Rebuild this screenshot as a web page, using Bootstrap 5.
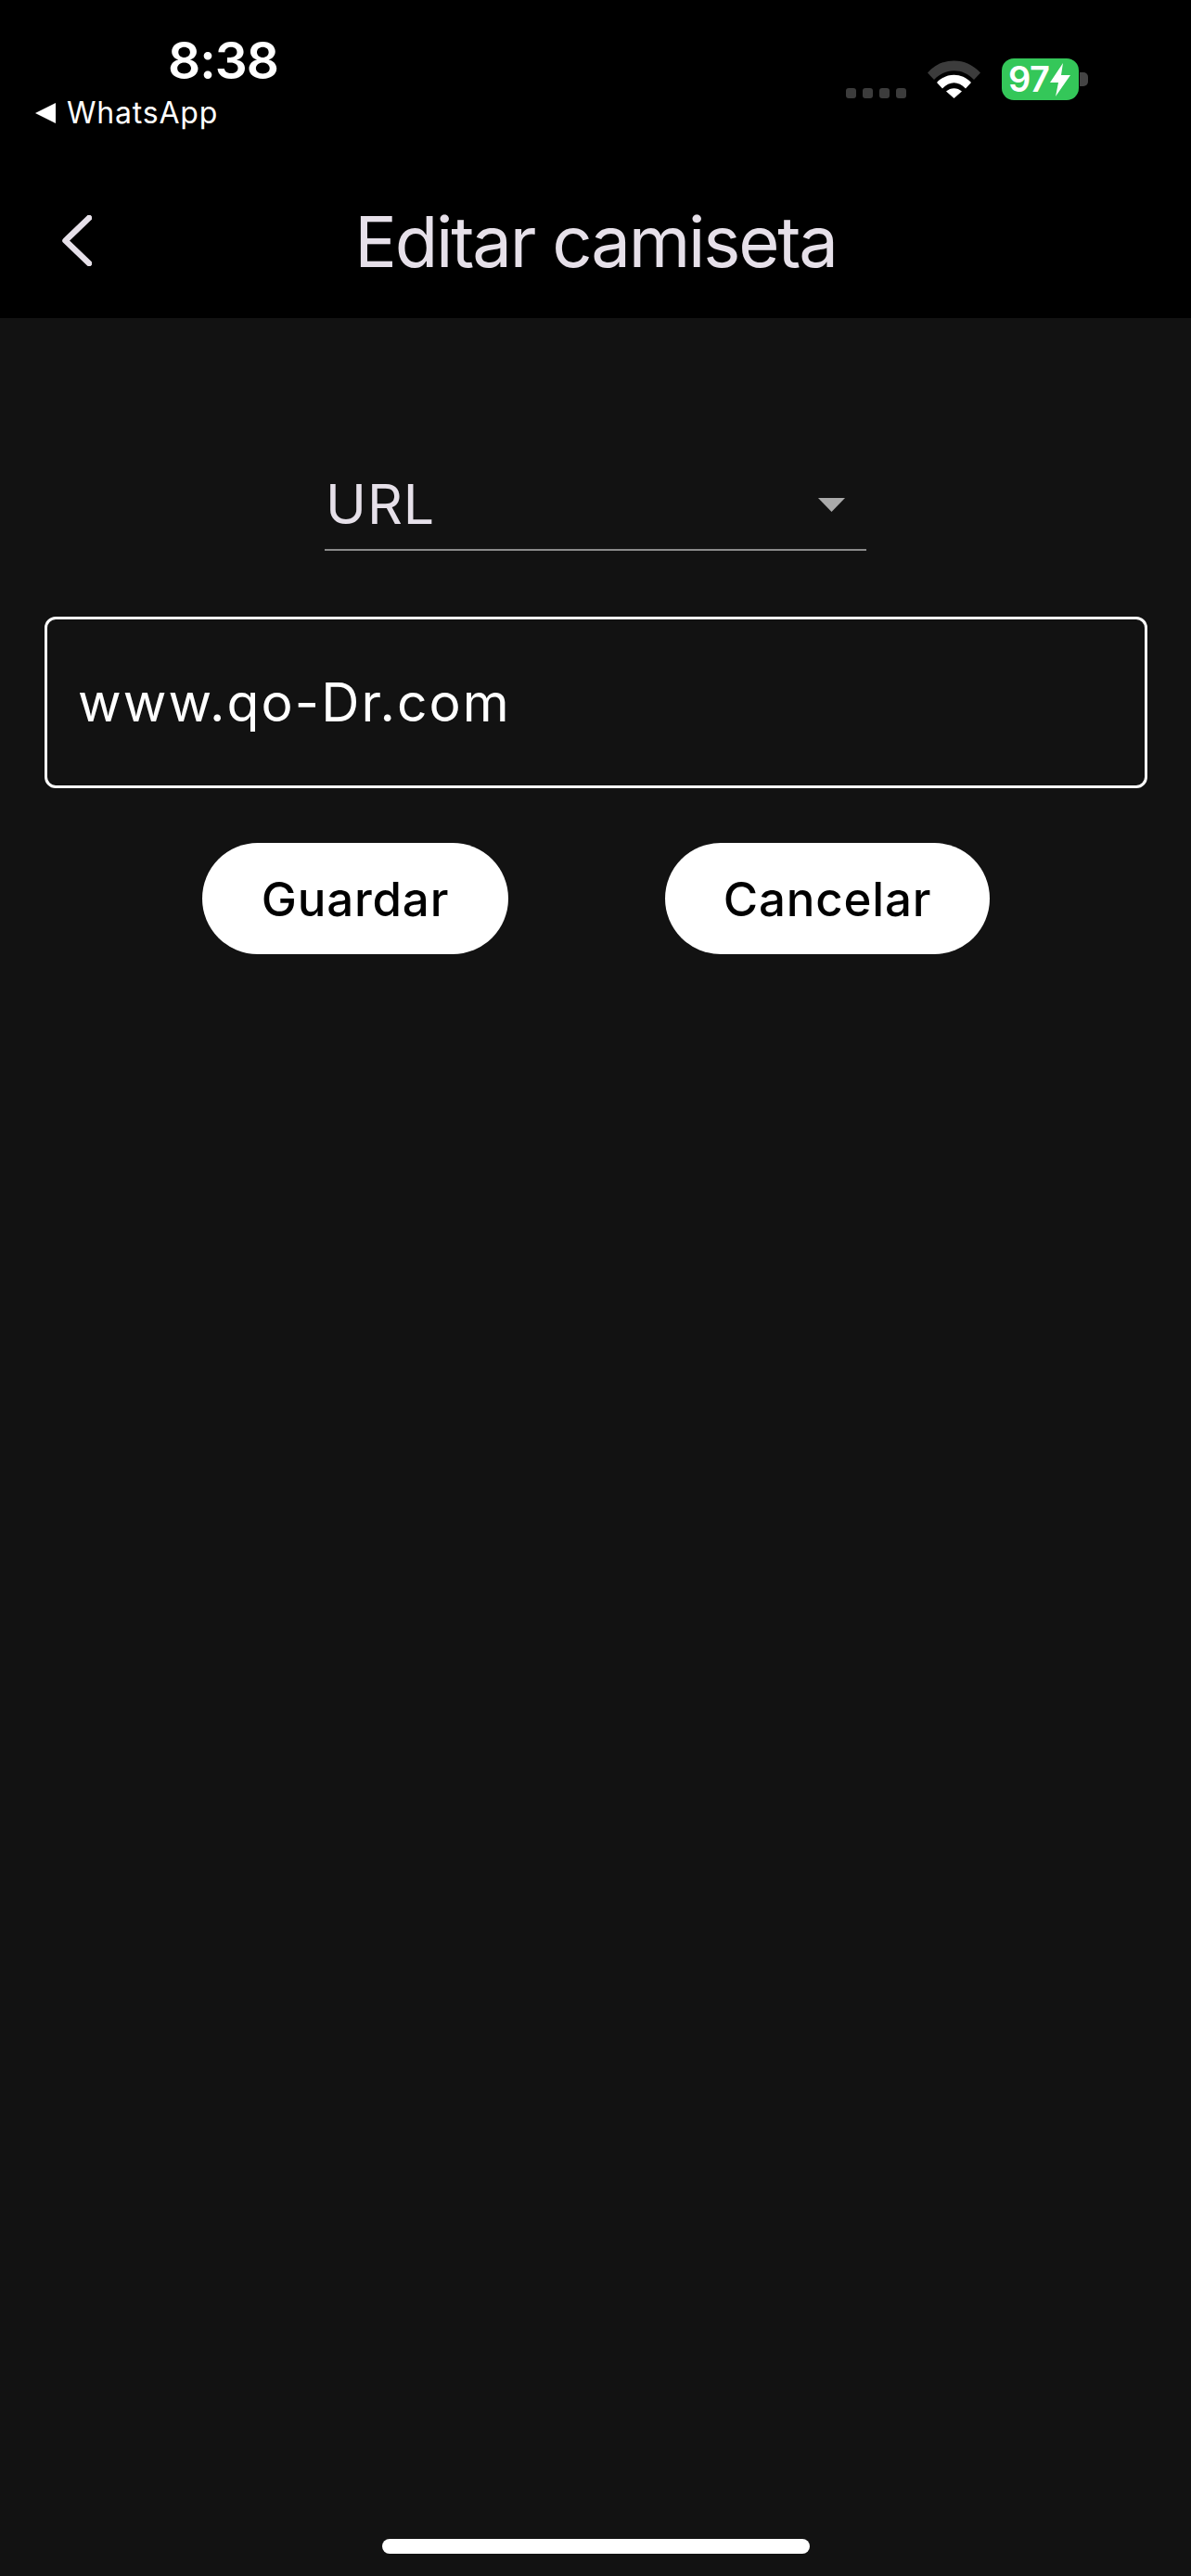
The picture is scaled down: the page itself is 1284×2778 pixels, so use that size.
<!DOCTYPE html>
<html lang="es">
<head>
<meta charset="utf-8">
<title>Editar camiseta</title>
<meta name="viewport" content="width=device-width, initial-scale=1">
<link rel="stylesheet" href="https://cdn.jsdelivr.net/npm/bootstrap@5.3.0/dist/css/bootstrap.min.css">
<style>
html, body { height: 100%; }
body { background: #121212; font-family: "Inter", "Roboto", sans-serif; color: #e6e0e9; }
.screen { height: 2778px; }
.top-area { background: #000; height: 343px; }
.status-row { height: 207px; padding: 35px 111px 0 38px; }
.clock-col { width: 262px; }
.clock { font-size: 55px; font-weight: 600; line-height: 60px; color: #fff; text-align: right; margin-bottom: 8px; letter-spacing: -1px; }
.back-app { font-size: 32px; line-height: 38px; color: #fff; gap: 12px; letter-spacing: .8px; }
.tri { width: 22px; height: 22px; }
.sig-dots { gap: 7px; padding-top: 60px; margin-right: 23px; }
.sig-dots span { width: 11px; height: 11px; border-radius: 3px; background: #3c3c3c; }
.wifi-ic { width: 57px; height: 41px; margin-top: 30px; margin-right: 23px; display: block; }
.batt-wrap { margin-top: 28px; }
.batt { width: 83px; height: 45px; background: #34c759; border-radius: 13px; color: #fff; font-size: 38px; font-weight: 600; line-height: 45px; gap: 1px; padding-left: 7px; letter-spacing: -.5px; }
.bolt { width: 22px; height: 36px; }
.batt-nub { width: 9px; height: 15px; background: #444; border-radius: 0 5px 5px 0; margin-left: 1px; }
.nav-row { display: grid; grid-template-columns: 1fr auto 1fr; height: 136px; }
.chev { width: 32px; height: 55px; margin-left: 67px; margin-top: 25px; display: block; }
.page-title { font-size: 76px; font-weight: 400; line-height: 106px; margin: 0; color: #e6e0e9; letter-spacing: -2.2px; }
.pick-row { width: 584px; margin: 141px auto 0; height: 110px; border-bottom: 2px solid #8a8a8a; padding: 11px 23px 0 1px; }
.pick-val { font-size: 59px; line-height: 70px; letter-spacing: 1px; }
.pick-arrow { width: 29px; height: 15px; display: block; margin-top: 1px; }
.url-box.form-control { margin: 71px 47px 0 48px; width: 1189px; height: 185px; background: transparent; border: 3px solid #fff; border-radius: 12px; color: #fff; font-size: 57px; line-height: 68px; padding: 56px 33px; letter-spacing: 2.1px; }
.act-row { margin-top: 59px; padding-left: 218px; gap: 169px; }
.act-btn.btn { height: 120px; border-radius: 60px; background: #fff; color: #000; border: 0; font-size: 51px; font-weight: 500; padding: 2px 0 0; letter-spacing: .8px; }
.act-save { width: 330px; }
.act-cancel { width: 350px; }
.home-bar { width: 461px; height: 16px; background: #fff; border-radius: 8px; margin: auto auto 24px; }
</style>
</head>
<body>
<div class="screen d-flex flex-column">
  <header class="top-area">
    <div class="status-row d-flex justify-content-between">
      <div class="clock-col">
        <div class="clock">8:38</div>
        <div class="back-app d-flex align-items-center">
          <svg class="tri" viewBox="0 0 22 22"><path d="M0 11 22 0V22Z" fill="#fff"/></svg>
          <span>WhatsApp</span>
        </div>
      </div>
      <div class="d-flex align-items-start">
        <div class="sig-dots d-flex"><span></span><span></span><span></span><span></span></div>
        <svg class="wifi-ic" viewBox="0 0 57 41">
          <path d="M0 13.5C15 -4 42 -4 57 13.5L50 21C38 8 19 8 7 21Z" fill="#3c3c3c"/>
          <path d="M10 24C20 13 37 13 47 24L41 30.5C33 22 24 22 16 30.5Z" fill="#fff"/>
          <path d="M20 33.5C25 29 32 29 37 33.5L28.5 41Z" fill="#fff"/>
        </svg>
        <div class="batt-wrap d-flex align-items-center">
          <div class="batt d-flex align-items-center">
            <span>97</span>
            <svg class="bolt" viewBox="0 0 22 36"><path d="M14 0 0 21H9L6 36 22 13H12Z" fill="#fff"/></svg>
          </div>
          <div class="batt-nub"></div>
        </div>
      </div>
    </div>
    <div class="nav-row">
      <div>
        <svg class="chev" viewBox="0 0 32 55"><path d="M29 3 3.5 27.5 29 52" fill="none" stroke="#e6e0e9" stroke-width="6.5" stroke-linecap="round" stroke-linejoin="round"/></svg>
      </div>
      <h1 class="page-title">Editar camiseta</h1>
      <div></div>
    </div>
  </header>
  <main>
    <div class="pick-row d-flex justify-content-between align-items-center">
      <span class="pick-val">URL</span>
      <svg class="pick-arrow" viewBox="0 0 29 15"><path d="M0 0H29L14.5 15Z" fill="#aaa"/></svg>
    </div>
    <div class="url-box form-control">www.qo-Dr.com</div>
    <div class="act-row d-flex">
      <button type="button" class="act-btn act-save btn">Guardar</button>
      <button type="button" class="act-btn act-cancel btn">Cancelar</button>
    </div>
  </main>
  <div class="home-bar"></div>
</div>
<script src="https://cdn.jsdelivr.net/npm/bootstrap@5.3.0/dist/js/bootstrap.bundle.min.js"></script>
</body>
</html>
